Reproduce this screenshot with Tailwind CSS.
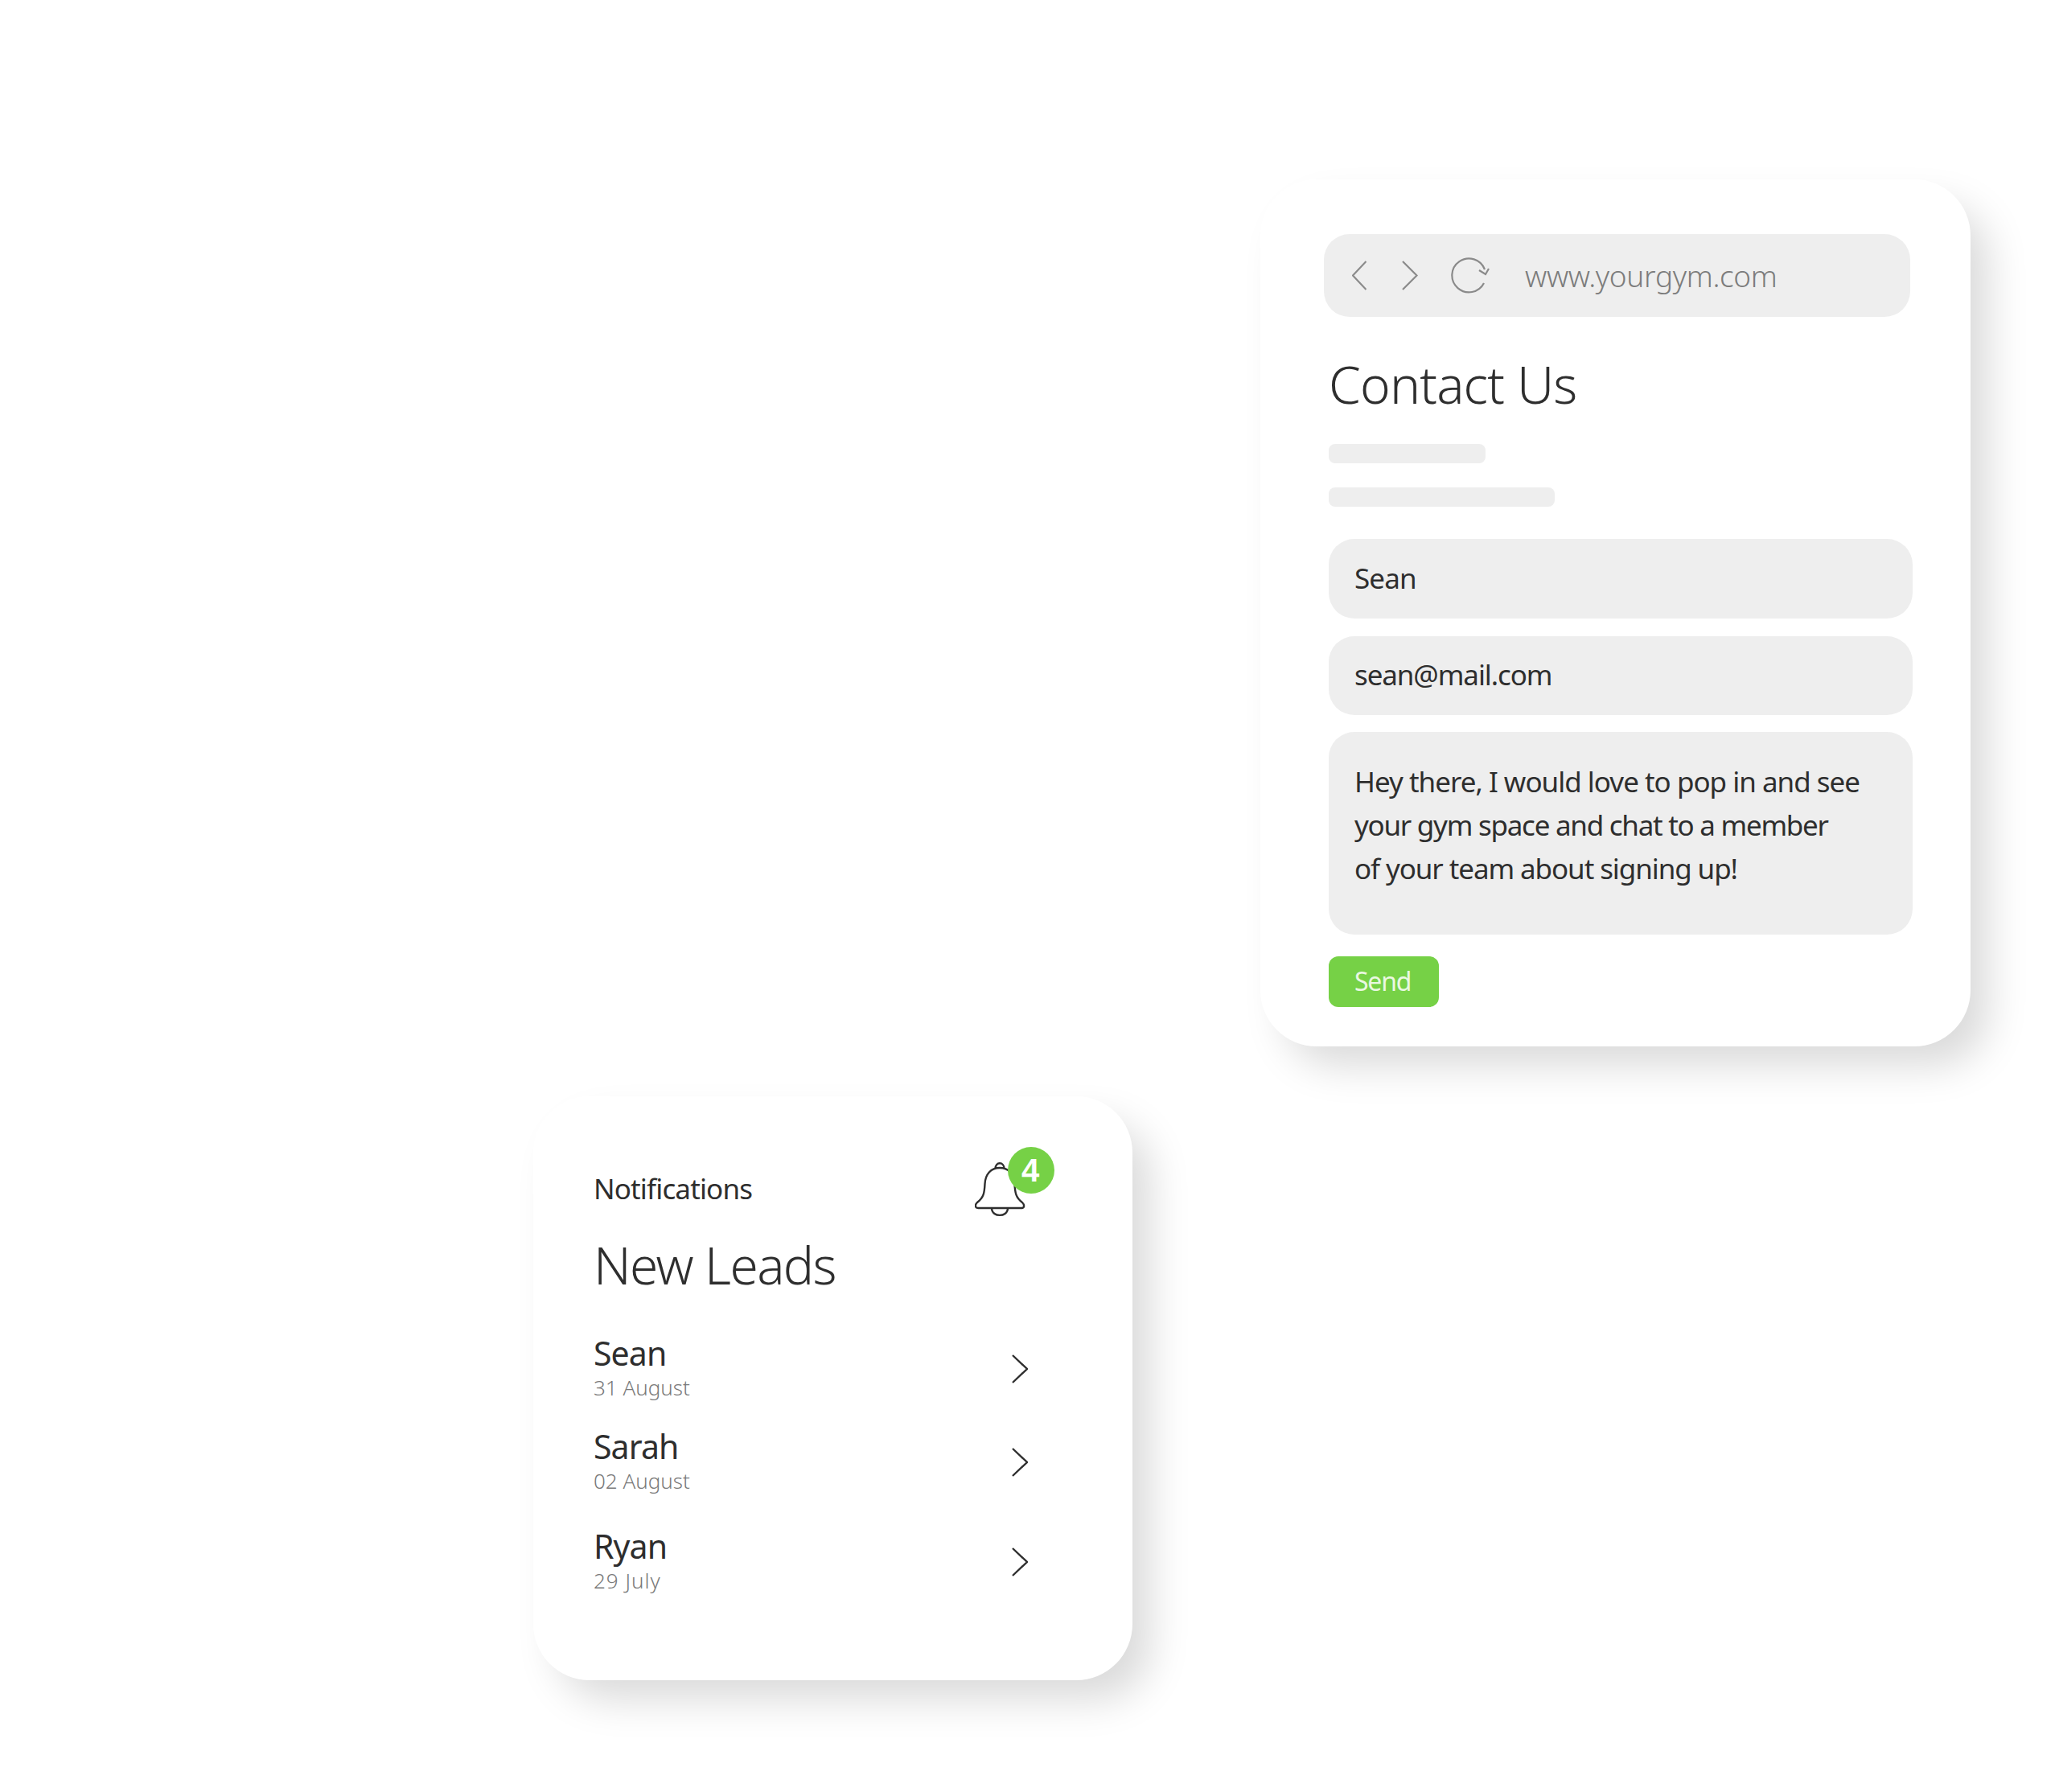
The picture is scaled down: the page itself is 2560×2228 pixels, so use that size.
<!DOCTYPE html>
<html>
<head>
<meta charset="utf-8">
<script src="https://cdn.jsdelivr.net/npm/@tailwindcss/browser@4"></script>
</head>
<body class="bg-white">
<div class="relative w-[2560px] h-[2228px] overflow-hidden bg-white font-['Noto_Sans',sans-serif] text-[#2e2e2e]">

  <section class="absolute left-[1567px] top-[223px] w-[883px] h-[1078px] rounded-[70px] bg-white pl-[85px] pt-[68px] shadow-[26px_28px_50px_-4px_rgba(0,0,0,0.15)]">
    <div class="-ml-[6px] flex h-[103px] w-[729px] items-center rounded-[32px] bg-[#eeeeee] text-[#7c7c7c]">
      <svg class="ml-[35px] shrink-0" width="18" height="37" viewBox="0 0 18 37" fill="none" stroke="#8a8a8a" stroke-width="2.2"><path d="M17.5 1 L1 18.5 L17.5 36"/></svg>
      <svg class="ml-[44px] shrink-0" width="20" height="37" viewBox="0 0 20 37" fill="none" stroke="#8a8a8a" stroke-width="2.2"><path d="M1 1 L18.5 18.5 L1 36"/></svg>
      <svg class="ml-[41px] shrink-0" width="50" height="46" viewBox="0 0 50 46" fill="none" stroke="#8a8a8a" stroke-width="2.2"><path d="M41 32 A21 21 0 1 1 42 15"/><path d="M35 16 L43 21 L47 14"/></svg>
      <span class="ml-[42px] text-[37px] font-light tracking-[-0.35px] whitespace-nowrap">www.yourgym.com</span>
    </div>
    <h1 class="mt-[42px] h-[116px] text-[64px] leading-[84px] font-light tracking-[-0.85px]">Contact Us</h1>
    <div class="h-[24px] w-[195px] rounded-[8px] bg-[#eeeeee]"></div>
    <div class="mt-[30px] h-[24px] w-[281px] rounded-[8px] bg-[#eeeeee]"></div>
    <div class="mt-[40px] flex h-[99px] w-[726px] items-center rounded-[32px] bg-[#eeeeee] pl-[32px] text-[35px] tracking-[-0.9px]">Sean</div>
    <div class="mt-[22px] flex h-[98px] w-[726px] items-center rounded-[32px] bg-[#eeeeee] pl-[32px] pb-[2px] text-[35px] tracking-[-1.1px]">sean@mail.com</div>
    <div class="mt-[21px] h-[252px] w-[726px] rounded-[32px] bg-[#eeeeee] pl-[32px] pt-[35px] text-[35px] leading-[54px]">
      <p class="whitespace-nowrap tracking-[-1px]">Hey there, I would love to pop in and see</p>
      <p class="whitespace-nowrap tracking-[-1.27px]">your gym space and chat to a member</p>
      <p class="whitespace-nowrap tracking-[-1.1px]">of your team about signing up!</p>
    </div>
    <div class="mt-[27px] flex h-[63px] w-[137px] items-center rounded-[12px] bg-[#76d146] pl-[32px] pb-[1px] text-[32px] tracking-[-1.2px] text-[#eaf8e2]">Send</div>
  </section>

  <section class="absolute left-[663px] top-[1363px] w-[745px] h-[726px] rounded-[70px] bg-white pl-[75px] pr-[130px] pt-[87px] shadow-[26px_28px_50px_-4px_rgba(0,0,0,0.15)]">
    <div class="relative h-[70px]">
      <h2 class="pt-[4px] text-[35px] leading-[48px] tracking-[-0.85px]">Notifications</h2>
      <svg class="absolute left-[474px] -top-[5px]" width="64" height="70" viewBox="0 0 64 70" fill="none" stroke="#2e2e2e" stroke-width="2.4" stroke-linejoin="round">
        <path d="M25.5 8 C25.5 -1 36.5 -1 36.5 8"/>
        <path d="M31 7 C20 7 13 15 12.5 27 C12 38 11 44 3 50 C0 53 0 57 4 57 L58 57 C62 57 62 53 59 50 C51 44 50 38 49.5 27 C49 15 42 7 31 7 Z"/>
        <path d="M21 58 C22 68.5 40 68.5 41 58"/>
      </svg>
      <div class="absolute left-[515px] -top-[24px] flex h-[58px] w-[58px] items-center justify-center rounded-full bg-[#76d146] pr-[2px] font-['Liberation_Sans',sans-serif] text-[40px] font-bold leading-none text-white">4</div>
    </div>
    <h2 class="mt-[13px] h-[110px] text-[64px] leading-[80px] font-light tracking-[-1.6px]">New Leads</h2>
    <div class="flex h-[116px] items-center justify-between">
      <div class="pb-[4px]">
        <div class="text-[41px] leading-[52px] tracking-[-0.9px]">Sean</div>
        <div class="text-[26px] leading-[34px] font-light tracking-[0px] text-[#7a7a7a]">31 August</div>
      </div>
      <svg class="mt-[1px]" width="20" height="36" viewBox="0 0 20 36" fill="none" stroke="#2e2e2e" stroke-width="2.4"><path d="M1 1 L19 18 L1 35"/></svg>
    </div>
    <div class="flex h-[116px] items-center justify-between">
      <div class="pb-[4px]">
        <div class="text-[41px] leading-[52px] tracking-[-0.9px]">Sarah</div>
        <div class="text-[26px] leading-[34px] font-light tracking-[0px] text-[#7a7a7a]">02 August</div>
      </div>
      <svg class="mt-[2px]" width="20" height="36" viewBox="0 0 20 36" fill="none" stroke="#2e2e2e" stroke-width="2.4"><path d="M1 1 L19 18 L1 35"/></svg>
    </div>
    <div class="mt-[8px] flex h-[116px] items-center justify-between">
      <div class="pb-[4px]">
        <div class="text-[41px] leading-[52px] tracking-[-0.9px]">Ryan</div>
        <div class="text-[26px] leading-[34px] font-light tracking-[1px] text-[#7a7a7a]">29 July</div>
      </div>
      <svg class="mt-[2px]" width="20" height="36" viewBox="0 0 20 36" fill="none" stroke="#2e2e2e" stroke-width="2.4"><path d="M1 1 L19 18 L1 35"/></svg>
    </div>
  </section>
</div>
</body>
</html>
